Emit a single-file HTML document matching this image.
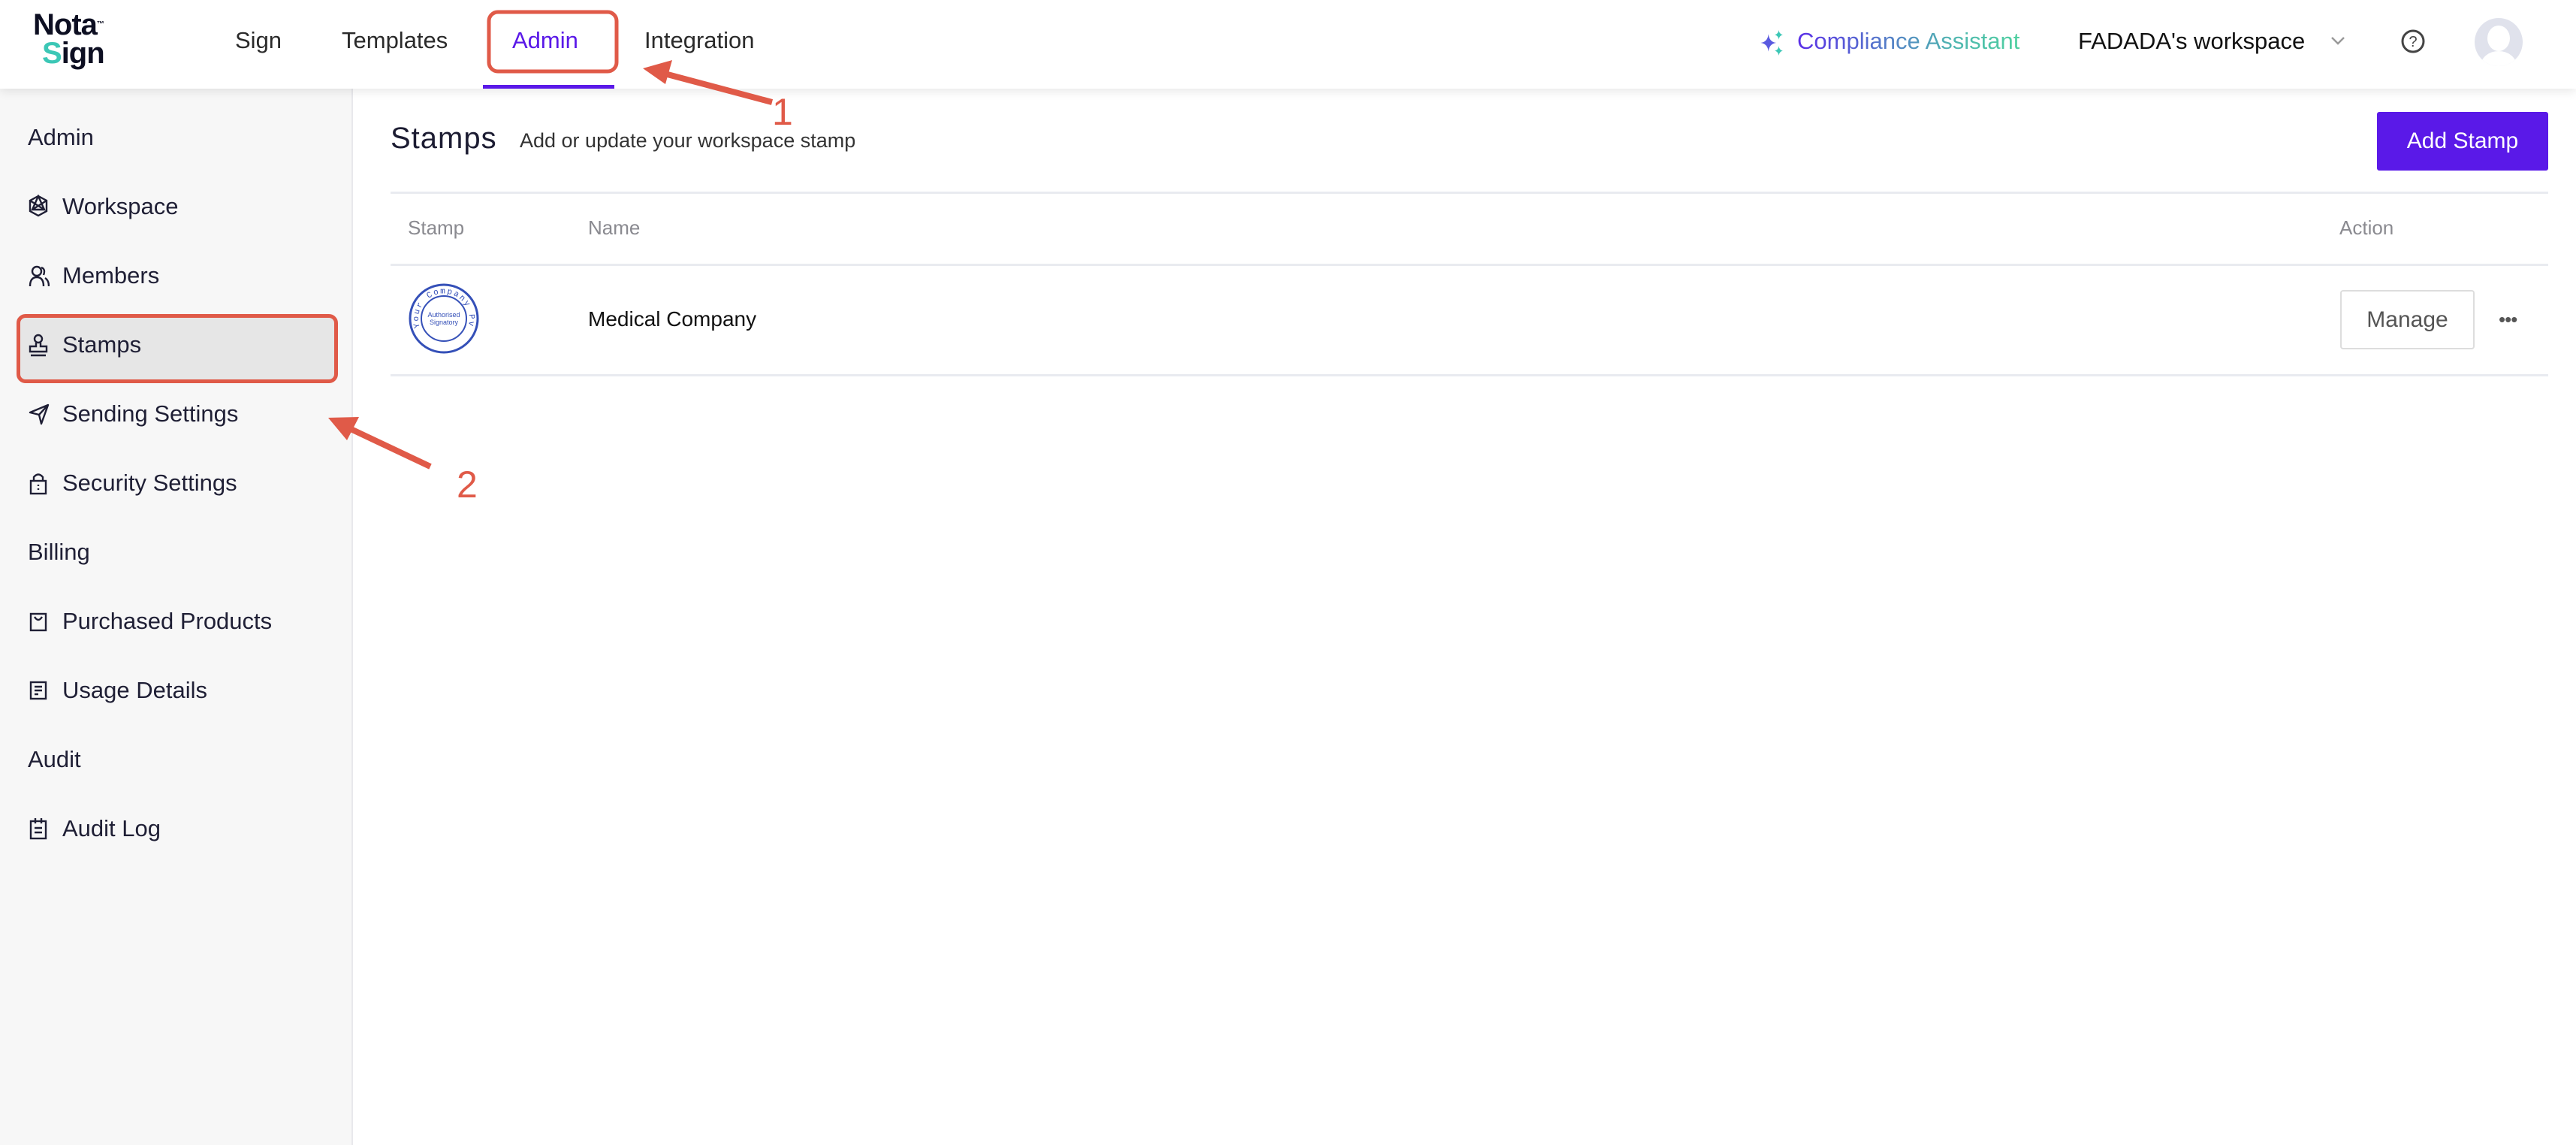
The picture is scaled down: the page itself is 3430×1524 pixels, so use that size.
<!DOCTYPE html>
<html><head><meta charset="utf-8"><style>
*{margin:0;padding:0;box-sizing:border-box}
body{width:3430px;height:1524px;background:#fff;font-family:"Liberation Sans",sans-serif;color:#1c1c32;position:relative;overflow:hidden}
.a{position:absolute;white-space:nowrap}
.hdr{position:absolute;left:0;top:0;width:3430px;height:118px;background:#fff;box-shadow:0 4px 12px rgba(0,0,0,0.09);z-index:2}
.nav{font-size:31px;color:#2a2a2a;top:36px}
.side{position:absolute;left:0;top:118px;width:470px;height:1406px;background:#f7f7f7;border-right:2px solid #e8e8ec}
.si{font-size:31px;color:#1f1f35;left:83px}
.sh{font-size:31px;color:#1f1f35;left:37px}
.ic{position:absolute;left:38px}
.line{position:absolute;left:520px;width:2873px;height:3px;background:#e9ebf0}
.th{font-size:26px;color:#8a8a90;top:288px}
</style></head><body>
<div class="hdr">
 <div class="a" style="left:44px;top:14px;font-weight:bold;font-size:40px;line-height:38px;color:#0d0f22;letter-spacing:-1px">Nota<sup style="font-size:10px;vertical-align:top">™</sup><br><span style="margin-left:12px"><span style="color:#3cc7b6">S</span>ign</span></div>
 <div class="a nav" style="left:313px">Sign</div>
 <div class="a nav" style="left:455px">Templates</div>
 <div class="a nav" style="left:682px;color:#5a19e8">Admin</div>
 <div class="a nav" style="left:858px">Integration</div>
 <div class="a" style="left:643px;top:113px;width:175px;height:5px;background:#5a19e8"></div>
 <svg class="a" style="left:2342px;top:38px" width="36" height="38" viewBox="0 0 34 34"><path d="M12 6 Q13 16 22 17 Q13 18 12 28 Q11 18 2 17 Q11 16 12 6Z" fill="#5a5ae0"/><path d="M25 1 Q25.6 6 30 7 Q25.6 8 25 13 Q24.4 8 20 7 Q24.4 6 25 1Z" fill="#3cc7b6"/><path d="M25 21 Q25.6 26 30 27 Q25.6 28 25 33 Q24.4 28 20 27 Q24.4 26 25 21Z" fill="#3cc7b6"/></svg>
 <div class="a" style="left:2393px;top:37px;font-size:31px;background:linear-gradient(90deg,#5a2ee8,#4fb6b0 70%,#4fd0a0);-webkit-background-clip:text;color:transparent">Compliance Assistant</div>
 <div class="a" style="left:2767px;top:37px;font-size:31px;color:#111">FADADA's workspace</div>
 <svg class="a" style="left:3102px;top:46px" width="22" height="16"><path d="M3 4 L11 12 L19 4" stroke="#999" stroke-width="2.5" fill="none"/></svg>
 <svg class="a" style="left:3196px;top:38px" width="34" height="34"><circle cx="17" cy="17" r="14" stroke="#444" stroke-width="3" fill="none"/><text x="17" y="24" font-size="20" text-anchor="middle" fill="#444" font-family="Liberation Sans">?</text></svg>
 <div class="a" style="left:3295px;top:24px;width:64px;height:64px;border-radius:50%;background:#e0e2ec;overflow:hidden"><div style="position:absolute;left:17px;top:10px;width:30px;height:34px;border-radius:50%;background:#fff"></div><div style="position:absolute;left:8px;top:44px;width:48px;height:40px;border-radius:50%;background:#fff"></div></div>
</div>

<div class="side"></div>
<div class="a sh" style="top:165px">Admin</div>
<svg class="ic" style="top:259px" width="26" height="30" viewBox="0 0 26 30"><path d="M13 2 L24 8 V22 L13 28 L2 22 V8Z M13 2 L5 20 H21Z M2 8 L21 20 M24 8 L5 20" stroke="#1f1f35" stroke-width="2.4" fill="none"/></svg>
<div class="a si" style="top:257px">Workspace</div>
<svg class="ic" style="top:352px" width="28" height="30"><circle cx="11" cy="9" r="6" stroke="#1f1f35" stroke-width="2.4" fill="none"/><path d="M2 29 Q2 17 11 17 Q20 17 20 29 M17 4 Q23 6 20 14 M22 18 Q27 21 27 29" stroke="#1f1f35" stroke-width="2.4" fill="none"/></svg>
<div class="a si" style="top:349px">Members</div>
<div class="a" style="left:22px;top:420px;width:425px;height:88px;background:#e6e6e6;border-radius:8px"></div>
<div class="a" style="left:22px;top:418px;width:428px;height:92px;border:5px solid #e05a48;border-radius:12px"></div>
<svg class="ic" style="top:443px" width="26" height="32"><circle cx="13" cy="8" r="5" stroke="#1f1f35" stroke-width="2.4" fill="none"/><path d="M10 13 V18 H2 V25 H24 V18 H16 V13 M3 30 H23" stroke="#1f1f35" stroke-width="2.4" fill="none"/></svg>
<div class="a si" style="top:441px">Stamps</div>
<svg class="ic" style="top:536px" width="28" height="30"><path d="M2 13 L26 3 L17 28 L14 16Z M14 16 L26 3" stroke="#1f1f35" stroke-width="2.4" fill="none" stroke-linejoin="round"/></svg>
<div class="a si" style="top:533px">Sending Settings</div>
<svg class="ic" style="top:627px" width="26" height="32"><path d="M7 13 V8 Q13 1 19 8 V13" stroke="#1f1f35" stroke-width="2.4" fill="none"/><rect x="3" y="13" width="20" height="17" stroke="#1f1f35" stroke-width="2.4" fill="none"/><path d="M13 18 V20 M13 23 V25" stroke="#1f1f35" stroke-width="2.4"/></svg>
<div class="a si" style="top:625px">Security Settings</div>
<div class="a sh" style="top:717px">Billing</div>
<svg class="ic" style="top:814px" width="26" height="28"><rect x="3" y="3" width="20" height="22" stroke="#1f1f35" stroke-width="2.4" fill="none"/><path d="M8 7 Q13 15 18 7" stroke="#1f1f35" stroke-width="2.4" fill="none"/></svg>
<div class="a si" style="top:809px">Purchased Products</div>
<svg class="ic" style="top:905px" width="26" height="28"><rect x="3" y="3" width="20" height="22" stroke="#1f1f35" stroke-width="2.4" fill="none"/><path d="M8 9 H18 M8 14 H18 M8 19 H13" stroke="#1f1f35" stroke-width="2.4"/></svg>
<div class="a si" style="top:901px">Usage Details</div>
<div class="a sh" style="top:993px">Audit</div>
<svg class="ic" style="top:1087px" width="26" height="32"><rect x="3" y="6" width="20" height="23" stroke="#1f1f35" stroke-width="2.4" fill="none"/><path d="M9 2 V9 M17 2 V9 M8 15 H18 M8 21 H18" stroke="#1f1f35" stroke-width="2.4"/></svg>
<div class="a si" style="top:1085px">Audit Log</div>

<div class="a" style="left:520px;top:162px;font-size:40px;color:#1c1c32;letter-spacing:1px">Stamps</div>
<div class="a" style="left:692px;top:172px;font-size:27px;color:#333">Add or update your workspace stamp</div>
<div class="a" style="left:3165px;top:149px;width:228px;height:78px;background:#5a19e8;border-radius:3px;color:#fff;font-size:30px;line-height:78px;text-align:center">Add Stamp</div>
<div class="line" style="top:255px"></div>
<div class="a th" style="left:543px">Stamp</div>
<div class="a th" style="left:783px">Name</div>
<div class="a th" style="left:3115px">Action</div>
<div class="line" style="top:351px"></div>
<svg class="a" style="left:543px;top:376px" width="96" height="96" viewBox="0 0 96 96"><circle cx="48" cy="48" r="45" stroke="#3550b8" stroke-width="3" fill="#fff"/><circle cx="48" cy="48" r="30" stroke="#3550b8" stroke-width="2" fill="none"/><text x="48" y="46" font-size="9" text-anchor="middle" fill="#3550b8" font-family="Liberation Sans">Authorised</text><text x="48" y="56" font-size="9" text-anchor="middle" fill="#3550b8" font-family="Liberation Sans">Signatory</text><path id="p" d="M16 60 A34 34 0 1 1 80 60" fill="none"/><text font-size="11" fill="#3550b8" font-family="Liberation Mono" letter-spacing="2"><textPath href="#p">Your Company Pvt. Ltd.</textPath></text></svg>
<div class="a" style="left:783px;top:409px;font-size:28px;color:#111">Medical Company</div>
<div class="a" style="left:3116px;top:386px;width:179px;height:79px;border:2px solid #ddd;border-radius:4px;font-size:30px;color:#555;line-height:75px;text-align:center">Manage</div>
<div class="a" style="left:3327px;top:410px;font-size:26px;color:#555;letter-spacing:-1px">•••</div>
<div class="line" style="top:498px"></div>

<svg class="a" style="left:0;top:0;z-index:3" width="3430" height="1524">
 <rect x="651" y="16" width="170" height="79" rx="12" stroke="#e05a48" stroke-width="5" fill="none"/>
 <path d="M1028 136 L885 98" stroke="#e05a48" stroke-width="8"/><path d="M856 91 L895 80 L886 112Z" fill="#e05a48"/>
 <text x="1028" y="166" font-size="50" fill="#e05a48" font-family="Liberation Sans">1</text>
 <path d="M573 621 L465 570" stroke="#e05a48" stroke-width="8"/><path d="M437 556 L478 555 L462 586Z" fill="#e05a48"/>
 <text x="608" y="662" font-size="50" fill="#e05a48" font-family="Liberation Sans">2</text>
</svg>
</body></html>
